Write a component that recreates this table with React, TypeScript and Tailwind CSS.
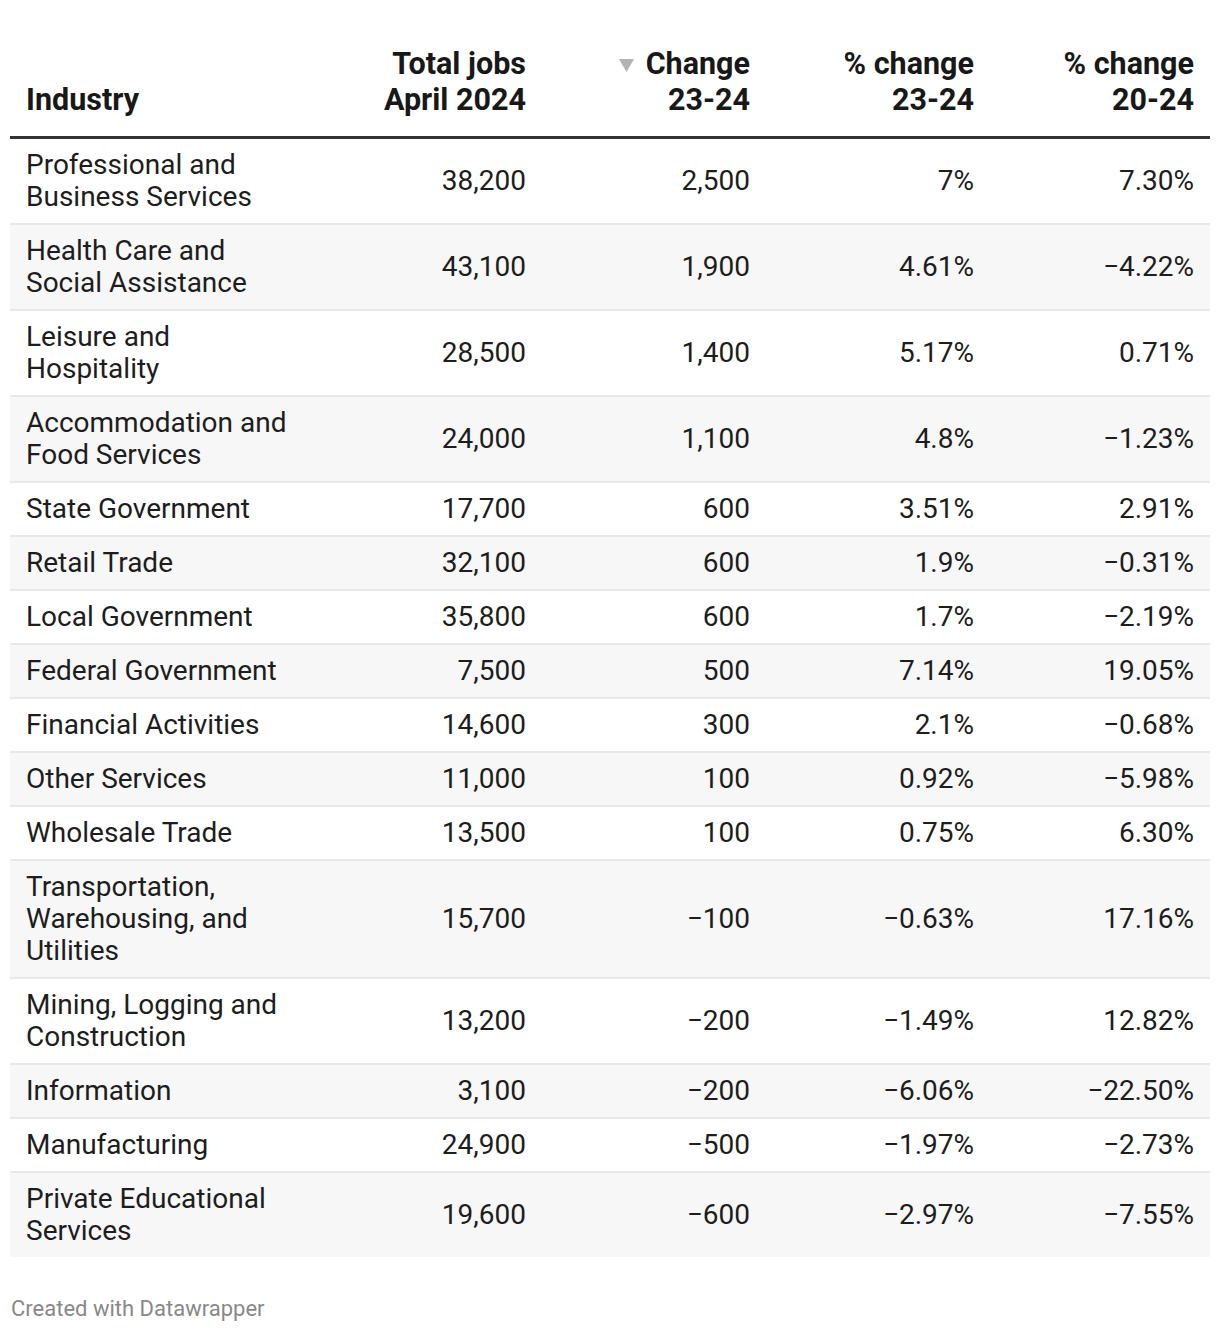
import React from "react";

const rows: [string, string, string, string, string][] = [
  ["Professional and Business Services", "38,200", "2,500", "7%", "7.30%"],
  ["Health Care and Social Assistance", "43,100", "1,900", "4.61%", "\u22124.22%"],
  ["Leisure and Hospitality", "28,500", "1,400", "5.17%", "0.71%"],
  ["Accommodation and Food Services", "24,000", "1,100", "4.8%", "\u22121.23%"],
  ["State Government", "17,700", "600", "3.51%", "2.91%"],
  ["Retail Trade", "32,100", "600", "1.9%", "\u22120.31%"],
  ["Local Government", "35,800", "600", "1.7%", "\u22122.19%"],
  ["Federal Government", "7,500", "500", "7.14%", "19.05%"],
  ["Financial Activities", "14,600", "300", "2.1%", "\u22120.68%"],
  ["Other Services", "11,000", "100", "0.92%", "\u22125.98%"],
  ["Wholesale Trade", "13,500", "100", "0.75%", "6.30%"],
  ["Transportation, Warehousing, and Utilities", "15,700", "\u2212100", "\u22120.63%", "17.16%"],
  ["Mining, Logging and Construction", "13,200", "\u2212200", "\u22121.49%", "12.82%"],
  ["Information", "3,100", "\u2212200", "\u22126.06%", "\u221222.50%"],
  ["Manufacturing", "24,900", "\u2212500", "\u22121.97%", "\u22122.73%"],
  ["Private Educational Services", "19,600", "\u2212600", "\u22122.97%", "\u22127.55%"],
];

const grid = "grid grid-cols-[300px_232px_224px_224px_220px]";

export default function App() {
  return (
    <div
      className="w-[1220px] bg-white px-[10px] pb-[20px] text-[#1d1d1d]"
      style={{ fontFamily: "Roboto, 'Liberation Sans', sans-serif" }}
    >
      <div className={`${grid} items-end border-b-[3px] border-[#333333] pt-[44px] pb-[18px] text-[30.5px] font-bold leading-[36px] text-[#181818]`}>
        <div className="pl-[16px]">Industry</div>
        <div className="pr-[16px] text-right">
          Total jobs
          <br />
          April 2024
        </div>
        <div className="pr-[16px] text-right">
          <span className="inline-flex items-center">
            <svg width="15" height="13" viewBox="0 0 15 13" className="mr-[12px] mt-[4px]">
              <polygon points="0,0 15,0 7.5,13" fill="#b3b3b3" />
            </svg>
            Change
          </span>
          <br />
          23-24
        </div>
        <div className="pr-[16px] text-right">
          % change
          <br />
          23-24
        </div>
        <div className="pr-[16px] text-right">
          % change
          <br />
          20-24
        </div>
      </div>
      {rows.map((r, i) => (
        <div
          key={r[0]}
          className={`${grid} items-center text-[28px] leading-[32px] ${
            i % 2 === 1 ? "bg-[#f7f7f7]" : "bg-white"
          } ${i === rows.length - 1 ? "" : "border-b-2 border-[#e8e8e8]"}`}
        >
          <div className="pl-[16px] pr-[14px] py-[10px]">{r[0]}</div>
          <div className="pr-[16px] py-[10px] text-right">{r[1]}</div>
          <div className="pr-[16px] py-[10px] text-right">{r[2]}</div>
          <div className="pr-[16px] py-[10px] text-right">{r[3]}</div>
          <div className="pr-[16px] py-[10px] text-right">{r[4]}</div>
        </div>
      ))}
      <div className="mt-[39px] pl-[1px] text-[22px] leading-[26px] text-[#888888]">
        Created with Datawrapper
      </div>
    </div>
  );
}
